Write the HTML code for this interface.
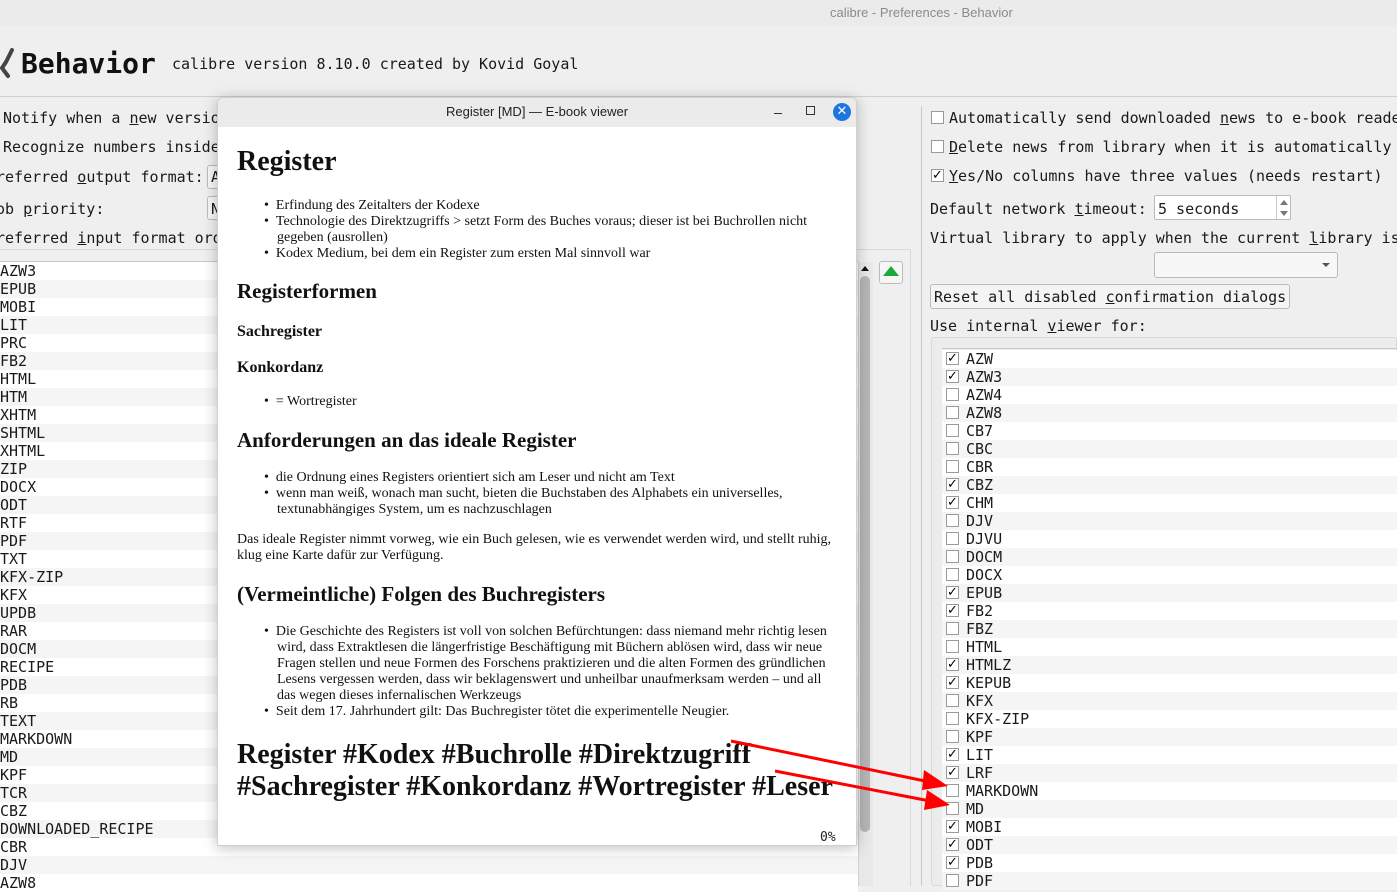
<!DOCTYPE html>
<html><head><meta charset="utf-8">
<style>
*{margin:0;padding:0;box-sizing:border-box}
body{width:1397px;height:886px;overflow:hidden;background:#efefef;position:relative;font-family:"DejaVu Sans Mono","Liberation Mono",monospace;font-size:15px;color:#1a1a1a}
.a{position:absolute;white-space:nowrap}
.m{font-family:"DejaVu Sans Mono",monospace;font-size:15px;line-height:18px}
u{text-decoration:underline}
.row{height:18px;line-height:18px;padding-left:0}
.row:nth-child(even){background:#f5f5f5}
.row:nth-child(odd){background:#fff}
.cb{position:absolute;width:13px;height:13px;border:1px solid #9a9a9a;background:#fff;font-size:13px;line-height:11px;text-align:center;color:#000;font-family:"DejaVu Sans",sans-serif;font-weight:bold}
.v{font-family:"Liberation Serif",serif;color:#111}
.v .t{position:absolute;white-space:nowrap;font-size:14px;line-height:16px}
.v h{position:absolute;font-weight:bold;white-space:nowrap}
</style></head><body>
<div class="a" style="left:0;top:0;width:1397px;height:26px;background:#ebebeb"></div>
<div class="a" style="left:830px;top:5px;font-family:'Liberation Sans',sans-serif;font-size:13px;color:#8a8a8a">calibre - Preferences - Behavior</div>
<svg class="a" style="left:0;top:48px" width="16" height="32"><path d="M12 2 L6 14 L2 20 L8 28" stroke="#444" stroke-width="4" fill="none" stroke-linecap="round"/></svg>
<div class="a" style="left:21px;top:47px;font-family:'DejaVu Sans Mono',monospace;font-size:28px;font-weight:bold;color:#111">Behavior</div>
<div class="a" style="left:172px;top:55px;font-size:15px">calibre version 8.10.0 created by Kovid Goyal</div>
<div class="a" style="left:0;top:96px;width:1397px;height:1px;background:#cfcfcf"></div>
<div class="a" style="left:3px;top:109px">Notify when a <u>n</u>ew version</div>
<div class="a" style="left:3px;top:138px">Recognize numbers inside</div>
<div class="a" style="left:-4px;top:168px">referred <u>o</u>utput format:</div>
<div class="a" style="left:207px;top:165px;width:20px;height:24px;border:1px solid #bbb;border-radius:3px;background:#f7f7f7"></div>
<div class="a" style="left:211px;top:168px">A</div>
<div class="a" style="left:-4px;top:200px">ob <u>p</u>riority:</div>
<div class="a" style="left:207px;top:196px;width:20px;height:24px;border:1px solid #bbb;border-radius:3px;background:#f7f7f7"></div>
<div class="a" style="left:211px;top:200px">N</div>
<div class="a" style="left:-4px;top:229px">referred <u>i</u>nput format ord</div>
<div class="a" style="left:0;top:249px;width:910px;height:1px;background:#d8d8d8"></div>
<div class="a" style="left:0;top:261px;width:858px;height:1px;background:#c8c8c8"></div>
<div class="a m" style="left:0;top:262px;width:858px">
<div class="row">AZW3</div><div class="row">EPUB</div><div class="row">MOBI</div><div class="row">LIT</div><div class="row">PRC</div><div class="row">FB2</div><div class="row">HTML</div><div class="row">HTM</div><div class="row">XHTM</div><div class="row">SHTML</div><div class="row">XHTML</div><div class="row">ZIP</div><div class="row">DOCX</div><div class="row">ODT</div><div class="row">RTF</div><div class="row">PDF</div><div class="row">TXT</div><div class="row">KFX-ZIP</div><div class="row">KFX</div><div class="row">UPDB</div><div class="row">RAR</div><div class="row">DOCM</div><div class="row">RECIPE</div><div class="row">PDB</div><div class="row">RB</div><div class="row">TEXT</div><div class="row">MARKDOWN</div><div class="row">MD</div><div class="row">KPF</div><div class="row">TCR</div><div class="row">CBZ</div><div class="row">DOWNLOADED_RECIPE</div><div class="row">CBR</div><div class="row">DJV</div><div class="row">AZW8</div>
</div>
<div class="a" style="left:858px;top:262px;width:15px;height:624px;background:#e8e8e8;border-left:1px solid #d0d0d0"></div>
<div class="a" style="left:861px;top:266px;width:0;height:0;border-left:4px solid transparent;border-right:4px solid transparent;border-bottom:5px solid #111"></div>
<div class="a" style="left:860px;top:276px;width:10px;height:556px;background:#b5b5b5;border-radius:5px"></div>
<div class="a" style="left:879px;top:261px;width:24px;height:23px;border:1px solid #bcbcbc;border-radius:3px;background:#f6f6f6"></div>
<div class="a" style="left:883px;top:266px;width:0;height:0;border-left:8px solid transparent;border-right:8px solid transparent;border-bottom:10px solid #1aaa3a"></div>
<div class="a" style="left:910px;top:250px;width:1px;height:636px;background:#d8d8d8"></div>
<div class="a" style="left:921px;top:106px;width:1px;height:780px;background:#c8c8c8"></div>
<div class="cb" style="left:931px;top:111px"></div>
<div class="a" style="left:949px;top:109px">Automatically send downloaded <u>n</u>ews to e-book reader</div>
<div class="cb" style="left:931px;top:140px"></div>
<div class="a" style="left:949px;top:138px"><u>D</u>elete news from library when it is automatically</div>
<div class="cb" style="left:931px;top:169px">✓</div>
<div class="a" style="left:949px;top:167px"><u>Y</u>es/No columns have three values (needs restart)</div>
<div class="a" style="left:930px;top:200px">Default network <u>t</u>imeout:</div>
<div class="a" style="left:1154px;top:195px;width:137px;height:25px;border:1px solid #bbb;border-radius:2px;background:#fff"></div>
<div class="a" style="left:1158px;top:200px">5 seconds</div>
<div class="a" style="left:1276px;top:196px;width:1px;height:23px;background:#ccc"></div>
<div class="a" style="left:1280px;top:200px;width:0;height:0;border-left:4px solid transparent;border-right:4px solid transparent;border-bottom:5px solid #777"></div>
<div class="a" style="left:1280px;top:211px;width:0;height:0;border-left:4px solid transparent;border-right:4px solid transparent;border-top:5px solid #777"></div>
<div class="a" style="left:930px;top:229px">Virtual library to apply when the current <u>l</u>ibrary is</div>
<div class="a" style="left:1154px;top:252px;width:184px;height:26px;border:1px solid #bbb;border-radius:3px;background:#f7f7f7"></div>
<div class="a" style="left:1322px;top:263px;width:0;height:0;border-left:4px solid transparent;border-right:4px solid transparent;border-top:4px solid #555"></div>
<div class="a" style="left:930px;top:284px;width:360px;height:25px;border:1px solid #bbb;border-radius:3px;background:#f4f4f4"></div>
<div class="a" style="left:934px;top:288px">Reset all disabled <u>c</u>onfirmation dialogs</div>
<div class="a" style="left:930px;top:317px">Use internal <u>v</u>iewer for:</div>
<div class="a" style="left:931px;top:337px;width:466px;height:549px;border:1px solid #d8d8d8;border-radius:3px;background:#ececec"></div>
<div class="a" style="left:942px;top:348px;width:455px;height:1px;background:#c8c8c8"></div>
<div class="a m" style="left:942px;top:350px;width:455px" id="rl"></div>
<script>
var items=[["AZW",1],["AZW3",1],["AZW4",0],["AZW8",0],["CB7",0],["CBC",0],["CBR",0],["CBZ",1],["CHM",1],["DJV",0],["DJVU",0],["DOCM",0],["DOCX",0],["EPUB",1],["FB2",1],["FBZ",0],["HTML",0],["HTMLZ",1],["KEPUB",1],["KFX",0],["KFX-ZIP",0],["KPF",0],["LIT",1],["LRF",1],["MARKDOWN",0],["MD",0],["MOBI",1],["ODT",1],["PDB",1],["PDF",0]];
var h="";items.forEach(function(it){h+='<div class="row" style="padding-left:24px;position:relative"><span class="cb" style="left:4px;top:2px">'+(it[1]?'✓':'')+'</span>'+it[0]+'</div>';});
document.getElementById("rl").innerHTML=h;
</script>
<div class="a" style="left:217px;top:97px;width:640px;height:749px;background:#fff;border:1px solid #d0d0d0;border-radius:6px 6px 0 0;box-shadow:0 2px 14px rgba(0,0,0,.25);overflow:hidden">
<div style="height:29px;background:#ebebeb;position:relative">
<div class="a" style="left:0;width:638px;text-align:center;top:6px;font-family:'Liberation Sans',sans-serif;font-size:13px;color:#222">Register [MD] — E-book viewer</div>
<div class="a" style="left:556px;top:15px;width:8px;height:1px;background:#333"></div>
<div class="a" style="left:588px;top:8px;width:9px;height:9px;border:1px solid #333"></div>
<div class="a" style="left:615px;top:5px;width:18px;height:18px;border-radius:50%;background:#1c75e0;color:#fff;text-align:center;font:13px/18px 'DejaVu Sans',sans-serif">✕</div>
</div>
<div class="v" style="position:absolute;left:-1px;top:1px;width:640px;height:749px">
<h class="a" style="left:20px;top:47px;font-size:28px">Register</h>
<div class="t" style="left:47px;top:99px">•&nbsp;&nbsp;Erfindung des Zeitalters der Kodexe</div>
<div class="t" style="left:47px;top:115px">•&nbsp;&nbsp;Technologie des Direktzugriffs &gt; setzt Form des Buches voraus; dieser ist bei Buchrollen nicht</div>
<div class="t" style="left:60px;top:131px">gegeben (ausrollen)</div>
<div class="t" style="left:47px;top:147px">•&nbsp;&nbsp;Kodex Medium, bei dem ein Register zum ersten Mal sinnvoll war</div>
<h class="a" style="left:20px;top:180px;font-size:21px">Registerformen</h>
<h class="a" style="left:20px;top:224px;font-size:16px">Sachregister</h>
<h class="a" style="left:20px;top:260px;font-size:16px">Konkordanz</h>
<div class="t" style="left:47px;top:295px">•&nbsp;&nbsp;= Wortregister</div>
<h class="a" style="left:20px;top:329px;font-size:21px">Anforderungen an das ideale Register</h>
<div class="t" style="left:47px;top:371px">•&nbsp;&nbsp;die Ordnung eines Registers orientiert sich am Leser und nicht am Text</div>
<div class="t" style="left:47px;top:387px">•&nbsp;&nbsp;wenn man weiß, wonach man sucht, bieten die Buchstaben des Alphabets ein universelles,</div>
<div class="t" style="left:60px;top:403px">textunabhängiges System, um es nachzuschlagen</div>
<div class="t" style="left:20px;top:433px">Das ideale Register nimmt vorweg, wie ein Buch gelesen, wie es verwendet werden wird, und stellt ruhig,</div>
<div class="t" style="left:20px;top:449px">klug eine Karte dafür zur Verfügung.</div>
<h class="a" style="left:20px;top:483px;font-size:21px">(Vermeintliche) Folgen des Buchregisters</h>
<div class="t" style="left:47px;top:525px">•&nbsp;&nbsp;Die Geschichte des Registers ist voll von solchen Befürchtungen: dass niemand mehr richtig lesen</div>
<div class="t" style="left:60px;top:541px">wird, dass Extraktlesen die längerfristige Beschäftigung mit Büchern ablösen wird, dass wir neue</div>
<div class="t" style="left:60px;top:557px">Fragen stellen und neue Formen des Forschens praktizieren und die alten Formen des gründlichen</div>
<div class="t" style="left:60px;top:573px">Lesens vergessen werden, dass wir beklagenswert und unheilbar unaufmerksam werden – und all</div>
<div class="t" style="left:60px;top:589px">das wegen dieses infernalischen Werkzeugs</div>
<div class="t" style="left:47px;top:605px">•&nbsp;&nbsp;Seit dem 17. Jahrhundert gilt: Das Buchregister tötet die experimentelle Neugier.</div>
<h class="a" style="left:20px;top:640px;font-size:28px;line-height:32px">Register #Kodex #Buchrolle #Direktzugriff<br>#Sachregister #Konkordanz #Wortregister #Leser</h>
<div class="a" style="left:603px;top:731px;font-family:'DejaVu Sans Mono',monospace;font-size:13px;color:#222">0%</div>
</div>
</div>
<svg class="a" style="left:0;top:0" width="1397" height="886">
<line x1="731" y1="741" x2="930" y2="782" stroke="#f00" stroke-width="3"/>
<polygon points="948,786 924,770 922,790" fill="#f00"/>
<line x1="775" y1="771" x2="930" y2="801" stroke="#f00" stroke-width="3"/>
<polygon points="950,805 927,790 924,810" fill="#f00"/>
</svg>
</body></html>
